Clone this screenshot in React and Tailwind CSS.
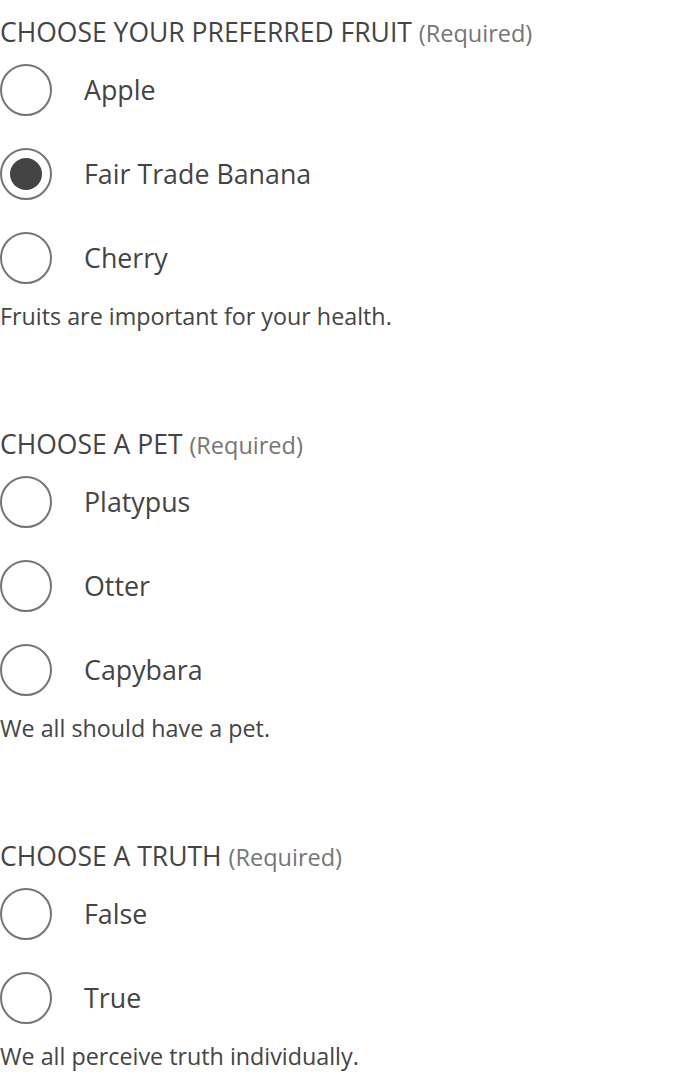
import React, { useState } from 'react';

const groups = [
  {
    name: 'fruit',
    title: 'CHOOSE YOUR PREFERRED FRUIT',
    options: ['Apple', 'Fair Trade Banana', 'Cherry'],
    initial: 'Fair Trade Banana',
    help: 'Fruits are important for your health.',
  },
  {
    name: 'pet',
    title: 'CHOOSE A PET',
    options: ['Platypus', 'Otter', 'Capybara'],
    initial: null,
    help: 'We all should have a pet.',
  },
  {
    name: 'truth',
    title: 'CHOOSE A TRUTH',
    options: ['False', 'True'],
    initial: null,
    help: 'We all perceive truth individually.',
  },
];

const RadioGroup = ({ group }) => {
  const [value, setValue] = useState(group.initial);

  return (
    <fieldset className="flex flex-col">
      <legend className="h-8 whitespace-nowrap text-[26.5px] leading-8 text-[#444]">
        {group.title} <span className="text-[23.5px] text-[#757575]">(Required)</span>
      </legend>
      <div className="mt-4 flex flex-col gap-8">
        {group.options.map((opt) => (
          <label key={opt} className="flex h-[52px] cursor-pointer items-center">
            <input
              type="radio"
              name={group.name}
              value={opt}
              checked={value === opt}
              onChange={() => setValue(opt)}
              className="sr-only"
            />
            <span className="flex h-[52px] w-[52px] shrink-0 items-center justify-center rounded-full border-2 border-[#757575] bg-white">
              {value === opt && <span className="h-8 w-8 rounded-full bg-[#444]" />}
            </span>
            <span className="ml-8 text-[26.8px] leading-8 text-[#444]">{opt}</span>
          </label>
        ))}
      </div>
      <p className="mt-4 text-[23.3px] leading-8 text-[#444]">{group.help}</p>
    </fieldset>
  );
};

export default function App() {
  return (
    <div className="min-h-screen bg-white pt-4 font-['Open_Sans',sans-serif]">
      <div className="flex flex-col gap-24">
        {groups.map((g) => (
          <RadioGroup key={g.name} group={g} />
        ))}
      </div>
    </div>
  );
}
